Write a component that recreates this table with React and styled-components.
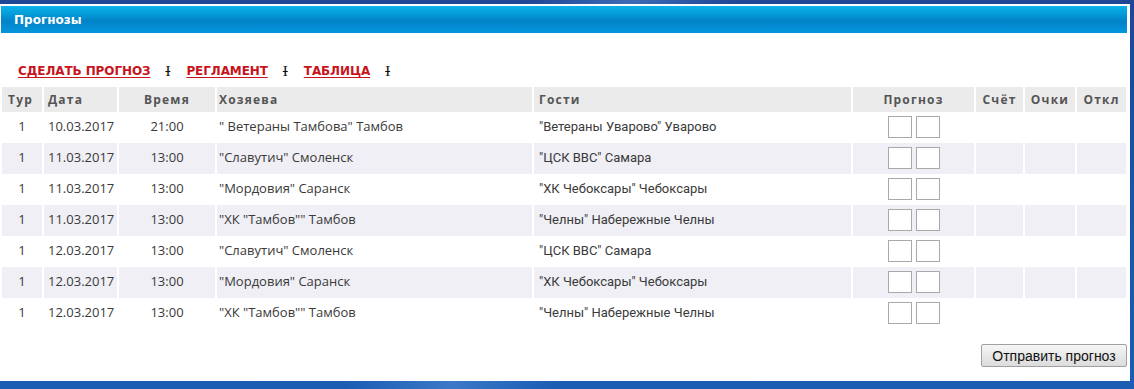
import React from "react";
import styled, { createGlobalStyle } from "styled-components";

const Global = createGlobalStyle`
  html, body {
    margin: 0;
    height: 389px;
    overflow: hidden;
  }
  body {
    background:
      linear-gradient(115deg, transparent 0 40%, rgba(120, 170, 240, 0.35) 48%, transparent 56%),
      linear-gradient(180deg, #1e4796 0%, #1d55a8 60%, #1a5db2 100%);
    font-family: "Open Sans", sans-serif;
  }
`;

const Panel = styled.div`
  margin-top: 4px;
  width: 1130px;
  height: 377px;
  background: #fff;
  display: flex;
  flex-direction: column;
`;

const TitleBar = styled.div`
  margin: 2px 3px 0 1px;
  height: 27px;
  display: flex;
  align-items: center;
  padding-left: 13px;
  background: linear-gradient(180deg, #0cb2ea 0%, #04a0dc 25%, #0283c8 55%, #058dd3 80%, #0296db 100%);
  color: #fff;
  font-family: "DejaVu Sans", sans-serif;
  font-weight: bold;
  font-size: 12px;
`;

const Nav = styled.div`
  margin: 28px 0 0 18px;
  height: 20px;
  display: flex;
  align-items: center;
`;

const NavLink = styled.a`
  color: #c8141c;
  font-family: "DejaVu Sans", sans-serif;
  font-weight: bold;
  font-size: 12px;
  letter-spacing: -0.1px;
  text-decoration: underline;
  text-underline-offset: 2px;
  cursor: pointer;
`;

const Sep = styled.span`
  margin: 0 16px 0 15px;
  font-family: "Liberation Serif", serif;
  font-size: 15px;
  line-height: 1;
  color: #111;
  text-decoration: line-through;
  text-decoration-thickness: 1px;
`;

const Table = styled.table`
  margin-top: 6px;
  width: 1128px;
  table-layout: fixed;
  border-collapse: separate;
  border-spacing: 2px 0;
`;

const Th = styled.th`
  box-sizing: border-box;
  height: 25px;
  padding: 0 ${(p) => p.$pad ?? 4}px;
  background: #ebebeb;
  color: #555;
  font-family: "Open Sans", sans-serif;
  font-weight: bold;
  font-size: 12px;
  line-height: 16px;
  letter-spacing: 1.2px;
  text-align: ${(p) => p.$align || "left"};
  white-space: nowrap;
  overflow: hidden;
`;

const Row = styled.tr`
  background: ${(p) => (p.$striped ? "#efeff5" : "#fff")};
`;

const Td = styled.td`
  box-sizing: border-box;
  height: 31px;
  padding: 0 ${(p) => p.$pad ?? 4}px 2px;
  color: #3a3a3a;
  font-family: ${(p) => (p.$narrow ? '"Roboto", sans-serif' : '"Open Sans", sans-serif')};
  font-size: 13px;
  line-height: 17px;
  text-align: ${(p) => p.$align || "left"};
  white-space: nowrap;
  overflow: hidden;
`;

const Scores = styled.div`
  display: flex;
  justify-content: center;
  gap: 4px;
`;

const ScoreInput = styled.input`
  box-sizing: border-box;
  width: 24px;
  height: 22px;
  margin: 0;
  padding: 0;
  border: 1px solid #a9a9a9;
  background: #fff;
`;

const Footer = styled.div`
  margin-top: 15px;
  padding-right: 3px;
  display: flex;
  justify-content: flex-end;
`;

const SubmitButton = styled.button`
  box-sizing: border-box;
  width: 146px;
  height: 23px;
  padding: 0;
  border: 1px solid #a0a0a0;
  border-radius: 2px;
  background: linear-gradient(180deg, #f6f6f6 0%, #e8e8e8 50%, #dcdcdc 100%);
  color: #111;
  font-family: "Liberation Sans", Arial, sans-serif;
  font-size: 14px;
`;

const matches = [
  ["10.03.2017", "21:00", '" Ветераны Тамбова" Тамбов', '"Ветераны Уварово" Уварово'],
  ["11.03.2017", "13:00", '"Славутич" Смоленск', '"ЦСК ВВС" Самара'],
  ["11.03.2017", "13:00", '"Мордовия" Саранск', '"ХК Чебоксары" Чебоксары'],
  ["11.03.2017", "13:00", '"ХК "Тамбов"" Тамбов', '"Челны" Набережные Челны'],
  ["12.03.2017", "13:00", '"Славутич" Смоленск', '"ЦСК ВВС" Самара'],
  ["12.03.2017", "13:00", '"Мордовия" Саранск', '"ХК Чебоксары" Чебоксары'],
  ["12.03.2017", "13:00", '"ХК "Тамбов"" Тамбов', '"Челны" Набережные Челны'],
];

export default function App() {
  return (
    <>
      <Global />
      <Panel>
        <TitleBar>Прогнозы</TitleBar>
        <Nav>
          <NavLink>СДЕЛАТЬ ПРОГНОЗ</NavLink>
          <Sep>I</Sep>
          <NavLink>РЕГЛАМЕНТ</NavLink>
          <Sep>I</Sep>
          <NavLink>ТАБЛИЦА</NavLink>
          <Sep>I</Sep>
        </Nav>
        <Table>
          <colgroup>
            <col style={{ width: 40 }} />
            <col style={{ width: 73 }} />
            <col style={{ width: 96 }} />
            <col style={{ width: 315 }} />
            <col style={{ width: 317 }} />
            <col style={{ width: 121 }} />
            <col style={{ width: 47 }} />
            <col style={{ width: 50 }} />
            <col style={{ width: 49 }} />
          </colgroup>
          <thead>
            <tr>
              <Th $pad={6}>Тур</Th>
              <Th>Дата</Th>
              <Th $align="center">Время</Th>
              <Th $pad={2}>Хозяева</Th>
              <Th $pad={5}>Гости</Th>
              <Th $align="center">Прогноз</Th>
              <Th $align="center" $pad={0}>Счёт</Th>
              <Th $align="center" $pad={0}>Очки</Th>
              <Th $align="center" $pad={0}>Откл</Th>
            </tr>
          </thead>
          <tbody>
            {matches.map(([date, time, home, away], i) => (
              <Row key={i} $striped={i % 2 === 1}>
                <Td $align="center">1</Td>
                <Td>{date}</Td>
                <Td $align="center">{time}</Td>
                <Td $pad={2}>{home}</Td>
                <Td $pad={5} $narrow>{away}</Td>
                <Td $align="center">
                  <Scores>
                    <ScoreInput type="text" />
                    <ScoreInput type="text" />
                  </Scores>
                </Td>
                <Td />
                <Td />
                <Td />
              </Row>
            ))}
          </tbody>
        </Table>
        <Footer>
          <SubmitButton>Отправить прогноз</SubmitButton>
        </Footer>
      </Panel>
    </>
  );
}
